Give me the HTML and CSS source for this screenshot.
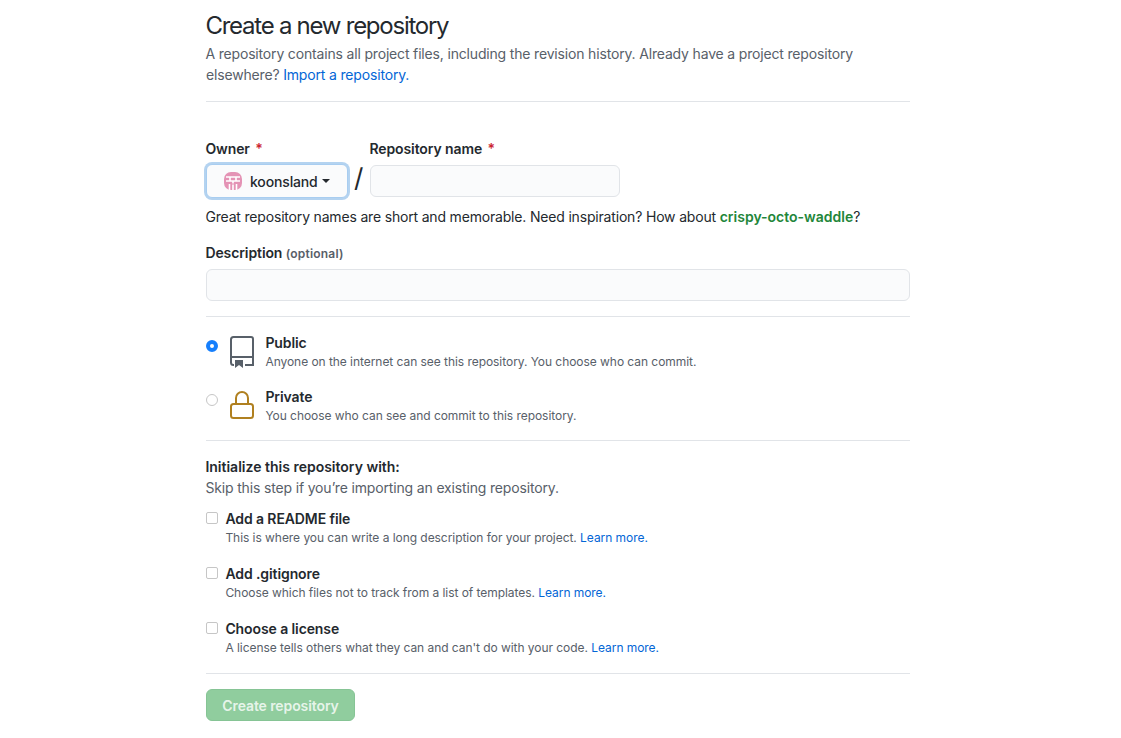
FILE: index.html
```html
<!DOCTYPE html>
<html lang="en">
<head>
    <meta charset="UTF-8">
    <title>Create a new repository</title>
    <link rel="stylesheet" href="styles.css">
</head>
<body>
<div class="container">
    <div class="subhead">
        <h2 class="subhead__heading">Create a new repository</h2>
        <p class="subhead__text">A repository contains all project files, including the revision history. Already have a project repository elsewhere? <a href="#" class="link">Import a repository.</a></p>
    </div>

    <div class="owner-row">
        <div class="field">
            <label class="field__label">Owner <span class="required">*</span></label>
            <button class="owner-select" type="button">
                <svg class="owner-select__avatar" width="18" height="18" viewBox="0 0 18 18">
                    <rect width="18" height="18" rx="7" fill="#e493b5"/>
                    <path d="M2 5h14M6 5v3.500M12 5v3.500M2 9h14M5.500 12v6M9 9v2.500M9 12.500V18M12.500 12v6" stroke="#fff" stroke-width="1.600" fill="none"/>
                </svg>
                koonsland
                <span class="caret"></span>
            </button>
        </div>
        <span class="slash">/</span>
        <div class="field">
            <label class="field__label">Repository name <span class="required">*</span></label>
            <input type="text" class="input input--name">
        </div>
    </div>
    <p class="hint">Great repository names are short and memorable. Need inspiration? How about <b class="suggestion">crispy-octo-waddle</b>?</p>

    <div class="description">
        <label class="field__label">Description <span class="optional">(optional)</span></label>
        <input type="text" class="input input--full">
    </div>

    <div class="visibility">
        <div class="option">
            <span class="radio radio--on"></span>
            <svg class="option__icon" width="24" height="32" viewBox="0 0 24 32" fill="none">
                <path d="M1 27V3.500Q1 1 3.500 1H21Q23 1 23 3V29H15M1 21H23M1 26.500Q1 29 3.500 29H4" stroke="#586069" stroke-width="2"/>
                <path d="M5 24h8v8l-4-3-4 3z" fill="#586069"/>
            </svg>
            <div>
                <div class="option__title">Public</div>
                <div class="option__note">Anyone on the internet can see this repository. You choose who can commit.</div>
            </div>
        </div>
        <div class="option">
            <span class="radio"></span>
            <svg class="option__icon" width="24" height="32" viewBox="0 0 24 32" fill="none">
                <path d="M6 14V8a6 6 0 0 1 12 0V14" stroke="#b08020" stroke-width="2"/>
                <rect x="1" y="14" width="22" height="14" rx="2.500" stroke="#b08020" stroke-width="2"/>
            </svg>
            <div>
                <div class="option__title">Private</div>
                <div class="option__note">You choose who can see and commit to this repository.</div>
            </div>
        </div>
    </div>

    <div class="init">
        <div class="init__title">Initialize this repository with:</div>
        <div class="init__text">Skip this step if you’re importing an existing repository.</div>
        <div class="check">
            <span class="checkbox"></span>
            <div>
                <div class="check__title">Add a README file</div>
                <div class="option__note">This is where you can write a long description for your project. <a href="#" class="link">Learn more.</a></div>
            </div>
        </div>
        <div class="check">
            <span class="checkbox"></span>
            <div>
                <div class="check__title">Add .gitignore</div>
                <div class="option__note">Choose which files not to track from a list of templates. <a href="#" class="link">Learn more.</a></div>
            </div>
        </div>
        <div class="check">
            <span class="checkbox"></span>
            <div>
                <div class="check__title">Choose a license</div>
                <div class="option__note">A license tells others what they can and can't do with your code. <a href="#" class="link">Learn more.</a></div>
            </div>
        </div>
    </div>

    <div class="actions">
        <button class="create-button" type="button" disabled>Create repository</button>
    </div>
</div>
</body>
</html>
```

FILE: styles.css
```css
* {
    box-sizing: border-box;
}
html, body {
    margin: 0;
    padding: 0;
    height: 100%;
    overflow: hidden;
}
body {
    background-color: #fff;
    color: #24292e;
    font-family: Inter, "Liberation Sans", sans-serif;
    font-size: 14px;
}
.container {
    width: 704px;
    margin-left: 206px;
    padding-top: 11px;
    text-indent: -.6px;
}
.link {
    color: #0366d6;
    text-decoration: none;
}
.subhead {
    height: 91px;
    border-bottom: 1px solid #e1e4e8;
}
.subhead__heading {
    margin: 0;
    font-size: 24px;
    line-height: 30px;
    font-weight: 400;
    letter-spacing: -1.25px;
}
.subhead__text {
    margin: 2px 0 0;
    font-size: 14px;
    line-height: 21px;
    color: #586069;
    letter-spacing: -.17px;
}
.owner-row {
    display: flex;
    margin-top: 36px;
}
.field__label {
    display: block;
    font-size: 14px;
    line-height: 21px;
    font-weight: 600;
    letter-spacing: -.1px;
}
.required {
    color: #cb2431;
    margin-left: 2px;
}
.optional {
    color: #586069;
    font-size: 12px;
    letter-spacing: .2px;
}
.owner-select {
    display: flex;
    align-items: center;
    width: 142px;
    height: 34px;
    margin: 5px 0 0;
    padding: 0 0 0 17px;
    background-color: #fafbfc;
    border: 1px solid #a8cdf0;
    border-radius: 6px;
    box-shadow: 0 0 0 2px #b4d3f0;
    color: #24292e;
    font-family: inherit;
    font-size: 14px;
    font-weight: 500;
    letter-spacing: -.15px;
}
.owner-select__avatar {
    margin-right: 8px;
}
.caret {
    margin-left: 4px;
    border: 4px solid transparent;
    border-top-color: #24292e;
    border-bottom: 0;
}
.slash {
    width: 22px;
    margin-top: 23px;
    text-align: center;
    font-size: 26px;
    line-height: 34px;
}
.input {
    display: block;
    height: 32px;
    background-color: #fafbfc;
    border: 1px solid #e1e4e8;
    border-radius: 6px;
}
.input--name {
    width: 250px;
    margin-top: 6px;
}
.input--full {
    width: 100%;
    margin-top: 5px;
}
.hint {
    margin: 8px 0 0;
    font-size: 14px;
    line-height: 21px;
    letter-spacing: -.18px;
}
.suggestion {
    color: #22863a;
    font-weight: 600;
    letter-spacing: 0;
}
.description {
    margin-top: 15px;
    padding-bottom: 15px;
    border-bottom: 1px solid #e1e4e8;
}
.visibility {
    padding-top: 16px;
    border-bottom: 1px solid #e1e4e8;
}
.option {
    display: flex;
    height: 54px;
}
.option:last-child {
    height: 53px;
}
.radio {
    flex: none;
    width: 12px;
    height: 12px;
    margin: 7px 12px 0 0;
    background-color: #fff;
    border: 1px solid #c6c6c6;
    border-radius: 50%;
}
.radio--on {
    border: 4px solid #167ffc;
}
.option__icon {
    flex: none;
    margin: 3px 12px 0 0;
}
.option__title, .check__title {
    font-size: 14px;
    line-height: 20px;
    font-weight: 600;
    letter-spacing: -.1px;
}
.option__note {
    font-size: 12px;
    line-height: 18px;
    color: #586069;
    letter-spacing: -.05px;
}
.init {
    padding-top: 15px;
}
.init__title {
    font-size: 14px;
    line-height: 21px;
    font-weight: 600;
}
.init__text {
    margin-bottom: 11px;
    font-size: 14px;
    line-height: 21px;
    color: #586069;
    letter-spacing: -.16px;
}
.check {
    display: flex;
    height: 55px;
}
.checkbox {
    flex: none;
    width: 12px;
    height: 12px;
    margin: 3px 8px 0 0;
    background-color: #fff;
    border: 1px solid #c6c6c6;
    border-radius: 2px;
}
.actions {
    margin-top: -1px;
    padding-top: 15px;
    border-top: 1px solid #e1e4e8;
    text-indent: 0;
}
.create-button {
    width: 149px;
    height: 32px;
    padding: 0;
    background-color: #90cd9e;
    border: 1px solid #86c495;
    border-radius: 6px;
    color: rgba(255, 255, 255, .8);
    font-family: inherit;
    font-size: 14px;
    font-weight: 600;
    letter-spacing: -.1px;
}
```
